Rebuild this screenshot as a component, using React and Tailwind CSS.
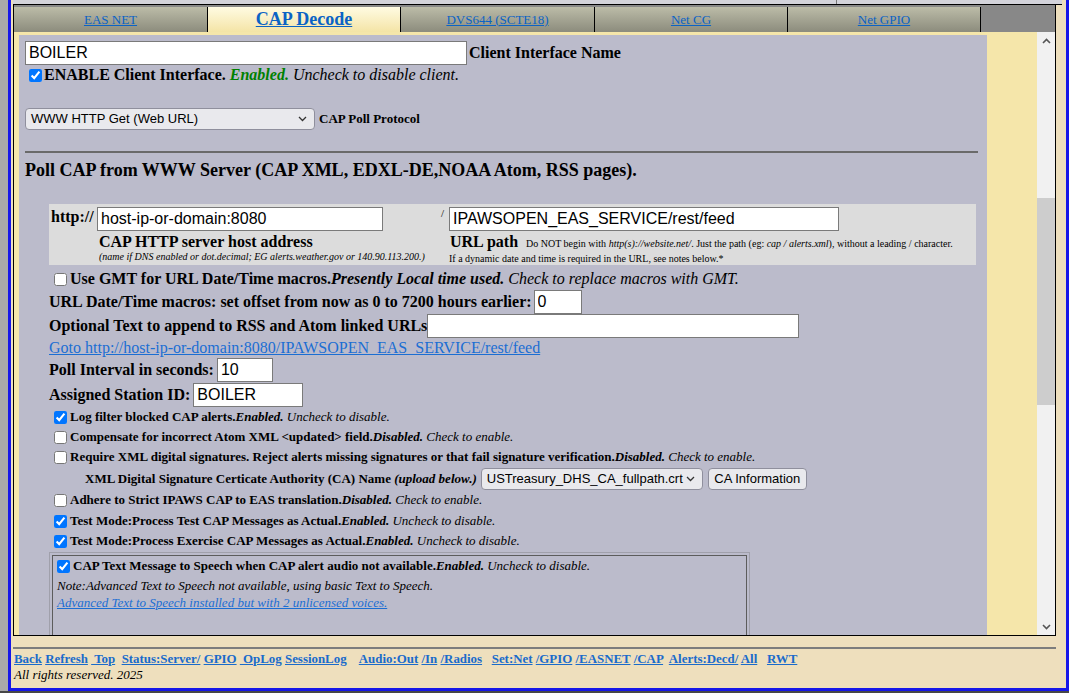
function Check({ checked }) {
  return (
    <input
      type="checkbox"
      defaultChecked={checked}
      className="m-0 h-[13px] w-[13px] shrink-0 accent-[#0075ff]"
    />
  );
}

function TextBox({ value, className = "" }) {
  return (
    <input
      defaultValue={value}
      className={`h-[24px] shrink-0 border border-[#7a7a7a] bg-white px-[3px] font-['Liberation_Sans',Arial,sans-serif] text-[16px] text-black outline-none ${className}`}
    />
  );
}

function FakeSelect({ value, className = "" }) {
  return (
    <div
      className={`flex h-[22px] shrink-0 items-center justify-between rounded-[4px] border border-[#8f8f9d] bg-[#e9e9ed] pl-[5px] pr-[7px] font-['Liberation_Sans',Arial,sans-serif] text-[13px] text-black ${className}`}
    >
      <span>{value}</span>
      <svg width="9" height="6" viewBox="0 0 9 6">
        <path d="M1 1l3.5 3.5L8 1" stroke="#333" strokeWidth="1.3" fill="none" />
      </svg>
    </div>
  );
}

function CheckRow({ checked, children, className = "" }) {
  return (
    <div className={`flex h-[20px] items-center pl-[29px] text-[13px] ${className}`}>
      <Check checked={checked} />
      <span className="ml-[3px] whitespace-nowrap">{children}</span>
    </div>
  );
}

const tabs = [
  { label: "EAS NET", w: "w-[194px]" },
  { label: "CAP Decode", w: "w-[193px]", active: true },
  { label: "DVS644 (SCTE18)", w: "w-[194px]" },
  { label: "Net CG", w: "w-[193px]" },
  { label: "Net GPIO", w: "w-[193px]" },
];

function Chevron({ up }) {
  return (
    <svg width="9" height="6" viewBox="0 0 9 6">
      <path
        d={up ? "M1 5l3.5-3.5L8 5" : "M1 1l3.5 3.5L8 1"}
        stroke="#555"
        strokeWidth="1.6"
        fill="none"
      />
    </svg>
  );
}

export default function App() {
  return (
    <div className="h-[693px] w-[1069px] overflow-hidden bg-[#474747] font-['Liberation_Serif','Times_New_Roman',serif] text-black">
      <div className="flex h-[691px] w-[1061px]">
        <div className="w-[8px] shrink-0 bg-[#a9a9a9]" />
        <div className="flex flex-1 flex-col border-x-[3px] border-b-[3px] border-[#1616e8] bg-[#eedfbd] pl-[2px] pr-[10px]">
          {/* frame */}
          <div className="flex h-[636px] flex-col">
            <div className="mr-[-6px] flex h-[5px] border-b border-black bg-[#d3d3da]">
              <div className="w-[824px] border-r border-[#777]" />
            </div>
            <div className="flex h-[27px] border-x border-black bg-[#888888] pt-[2px]">
              {tabs.map((t) =>
                t.active ? (
                  <div
                    key={t.label}
                    className={`${t.w} flex items-center justify-center border-r border-black bg-gradient-to-b from-[#fffbe2] to-[#f4e4a6]`}
                  >
                    <span className="text-[18px] font-bold text-[#0b63c5] underline">{t.label}</span>
                  </div>
                ) : (
                  <div
                    key={t.label}
                    className={`${t.w} flex items-center justify-center border-r border-black bg-gradient-to-b from-[#bcbca8] to-[#8c8c7d]`}
                  >
                    <span className="text-[13px] text-[#0b63c5] underline">{t.label}</span>
                  </div>
                )
              )}
              <div className="flex-1" />
            </div>
            <div className="flex h-[604px] overflow-hidden border-x border-b border-black bg-[#f5e6aa]">
              <div className="flex-1 overflow-hidden pl-[5px] pt-[3px]">
                <div className="h-[700px] w-[968px] bg-[#bbbbcb] pl-[6px] pt-[6px]">
                  <div className="flex h-[24px] items-center">
                    <TextBox value="BOILER" className="w-[442px]" />
                    <b className="ml-[2px] text-[16px]">Client Interface Name</b>
                  </div>
                  <div className="flex h-[20px] items-center pl-[4px] text-[16px]">
                    <Check checked />
                    <span className="ml-[2px] whitespace-nowrap">
                      <b>ENABLE Client Interface.</b>{" "}
                      <b className="italic text-[#008000]">Enabled.</b>{" "}
                      <i>Uncheck to disable client.</i>
                    </span>
                  </div>
                  <div className="mt-[23px] flex h-[22px] items-center">
                    <FakeSelect value="WWW HTTP Get (Web URL)" className="w-[290px]" />
                    <b className="ml-[4px] text-[13px]">CAP Poll Protocol</b>
                  </div>
                  <div className="mt-[21px] h-[2px] w-[953px] bg-[#6a6a6a]" />
                  <div className="mt-[6px] flex h-[22px] items-center text-[18px] font-bold">
                    Poll CAP from WWW Server (CAP XML, EDXL-DE,NOAA Atom, RSS pages).
                  </div>

                  <div className="ml-[24px] mt-[23px] flex h-[61px] w-[927px] bg-[#dcdcdc] pl-[2px] pt-[3px]">
                    <div className="w-[46px] pt-[1px] text-[16px] font-bold leading-[18px]">http://</div>
                    <div className="flex w-[344px] flex-col">
                      <TextBox value="host-ip-or-domain:8080" className="w-[286px]" />
                      <div className="mt-[2px] pl-[2px] text-[16px] font-bold leading-[18px]">
                        CAP HTTP server host address
                      </div>
                      <div className="whitespace-nowrap pl-[2px] text-[10px] italic leading-[11px]">
                        (name if DNS enabled or dot.decimal; EG alerts.weather.gov or 140.90.113.200.)
                      </div>
                    </div>
                    <div className="w-[8px] text-[11px] leading-[12px]">/</div>
                    <div className="flex flex-col">
                      <TextBox value="IPAWSOPEN_EAS_SERVICE/rest/feed" className="w-[390px]" />
                      <div className="mt-[2px] whitespace-nowrap leading-[18px]">
                        <b className="ml-[1px] text-[16px]">URL path</b>
                        <span className="ml-[8px] text-[10px]">
                          Do NOT begin with <i>http(s)://website.net/</i>. Just the path (eg:{" "}
                          <i>cap / alerts.xml</i>), without a leading / character.
                        </span>
                      </div>
                      <div className="whitespace-nowrap text-[10px] leading-[11px]">
                        If a dynamic date and time is required in the URL, see notes below.*
                      </div>
                    </div>
                  </div>

                  <div className="mt-[4px] flex h-[20px] items-center pl-[29px] text-[16px]">
                    <Check />
                    <span className="ml-[3px] whitespace-nowrap">
                      <b>Use GMT for URL Date/Time macros.</b>
                      <b className="italic">Presently Local time used.</b>{" "}
                      <i>Check to replace macros with GMT.</i>
                    </span>
                  </div>
                  <div className="mt-[1px] flex h-[24px] items-center pl-[24px] text-[16px]">
                    <b className="whitespace-nowrap">
                      URL Date/Time macros: set offset from now as 0 to 7200 hours earlier:
                    </b>
                    <TextBox value="0" className="ml-[2px] w-[48px]" />
                  </div>
                  <div className="flex h-[24px] items-center pl-[24px] text-[16px]">
                    <b className="whitespace-nowrap">Optional Text to append to RSS and Atom linked URLs</b>
                    <TextBox value="" className="w-[372px]" />
                  </div>
                  <div className="flex h-[20px] items-center pl-[24px] text-[16px]">
                    <a className="text-[#1b6ed3] underline">
                      Goto http://host-ip-or-domain:8080/IPAWSOPEN_EAS_SERVICE/rest/feed
                    </a>
                  </div>
                  <div className="flex h-[24px] items-center pl-[24px] text-[16px]">
                    <b>Poll Interval in seconds:</b>
                    <TextBox value="10" className="ml-[3px] w-[56px]" />
                  </div>
                  <div className="mt-[1px] flex h-[24px] items-center pl-[24px] text-[16px]">
                    <b>Assigned Station ID:</b>
                    <TextBox value="BOILER" className="ml-[3px] w-[110px]" />
                  </div>

                  <CheckRow checked>
                    <b>Log filter blocked CAP alerts.</b>
                    <b className="italic">Enabled.</b> <i>Uncheck to disable.</i>
                  </CheckRow>
                  <CheckRow>
                    <b>Compensate for incorrect Atom XML &lt;updated&gt; field.</b>
                    <b className="italic">Disabled.</b> <i>Check to enable.</i>
                  </CheckRow>
                  <CheckRow>
                    <b>
                      Require XML digital signatures. Reject alerts missing signatures or that fail signature
                      verification.
                    </b>
                    <b className="italic">Disabled.</b> <i>Check to enable.</i>
                  </CheckRow>
                  <div className="mt-[1px] flex h-[22px] items-center pl-[60px] text-[13px]">
                    <span className="whitespace-nowrap">
                      <b>XML Digital Signature Certicate Authority (CA) Name</b>{" "}
                      <b className="italic">(upload below.)</b>
                    </span>
                    <FakeSelect value="USTreasury_DHS_CA_fullpath.crt" className="ml-[4px] w-[222px]" />
                    <button className="ml-[5px] h-[22px] w-[99px] rounded-[4px] border border-[#8f8f9d] bg-[#e9e9ed] font-['Liberation_Sans',Arial,sans-serif] text-[13px] text-black">
                      CA Information
                    </button>
                  </div>
                  <CheckRow>
                    <b>Adhere to Strict IPAWS CAP to EAS translation.</b>
                    <b className="italic">Disabled.</b> <i>Check to enable.</i>
                  </CheckRow>
                  <CheckRow checked className="mt-[1px]">
                    <b>Test Mode:Process Test CAP Messages as Actual.</b>
                    <b className="italic">Enabled.</b> <i>Uncheck to disable.</i>
                  </CheckRow>
                  <CheckRow checked>
                    <b>Test Mode:Process Exercise CAP Messages as Actual.</b>
                    <b className="italic">Enabled.</b> <i>Uncheck to disable.</i>
                  </CheckRow>

                  <div className="ml-[24px] mt-[1px] w-[701px] border border-[#a0a0ab] p-[2px]">
                    <div className="h-[200px] border border-[#5c5c5c] pl-[4px] text-[13px]">
                      <div className="flex h-[20px] items-center">
                        <Check checked />
                        <span className="ml-[3px] whitespace-nowrap">
                          <b>CAP Text Message to Speech when CAP alert audio not available.</b>
                          <b className="italic">Enabled.</b> <i>Uncheck to disable.</i>
                        </span>
                      </div>
                      <div className="mt-[1px] flex h-[18px] items-center italic">
                        Note:Advanced Text to Speech not available, using basic Text to Speech.
                      </div>
                      <div className="flex h-[16px] items-center italic">
                        <a className="text-[#1b6ed3] underline">
                          Advanced Text to Speech installed but with 2 unlicensed voices.
                        </a>
                      </div>
                    </div>
                  </div>
                </div>
              </div>
              {/* scrollbar */}
              <div className="flex w-[18px] flex-col bg-[#f1f1f1]">
                <div className="flex h-[17px] items-center justify-center">
                  <Chevron up />
                </div>
                <div className="h-[149px]" />
                <div className="h-[207px] bg-[#cdcdcd]" />
                <div className="flex-1" />
                <div className="flex h-[17px] items-center justify-center">
                  <Chevron />
                </div>
              </div>
            </div>
          </div>

          {/* footer */}
          <div className="mt-[11px] h-[2px] w-[1043px] bg-[#7d7d7d]" />
          <div className="ml-[1px] mt-[3px] h-[15px] whitespace-pre text-[12.9px] font-bold leading-[15px] text-[#1a6bcb]">
            <a className="underline">Back</a> <a className="underline">Refresh</a>{" "}
            <a className="underline"> Top</a>{"  "}
            <a className="underline">Status:Server/</a> <a className="underline">GPIO</a>{" "}
            <a className="underline"> OpLog</a> <a className="underline">SessionLog</a>{"    "}
            <a className="underline">Audio:Out</a> <a className="underline">/In</a>{" "}
            <a className="underline">/Radios</a>{"   "}
            <a className="underline">Set:Net</a> <a className="underline">/GPIO</a>{" "}
            <a className="underline">/EASNET</a> <a className="underline">/CAP</a>{"  "}
            <a className="underline">Alerts:Decd/</a> <a className="underline">All</a>{"   "}
            <a className="underline">RWT</a>
          </div>
          <div className="ml-[1px] h-[15px] text-[13px] italic leading-[15px]">All rights reserved. 2025</div>
        </div>
      </div>
    </div>
  );
}
